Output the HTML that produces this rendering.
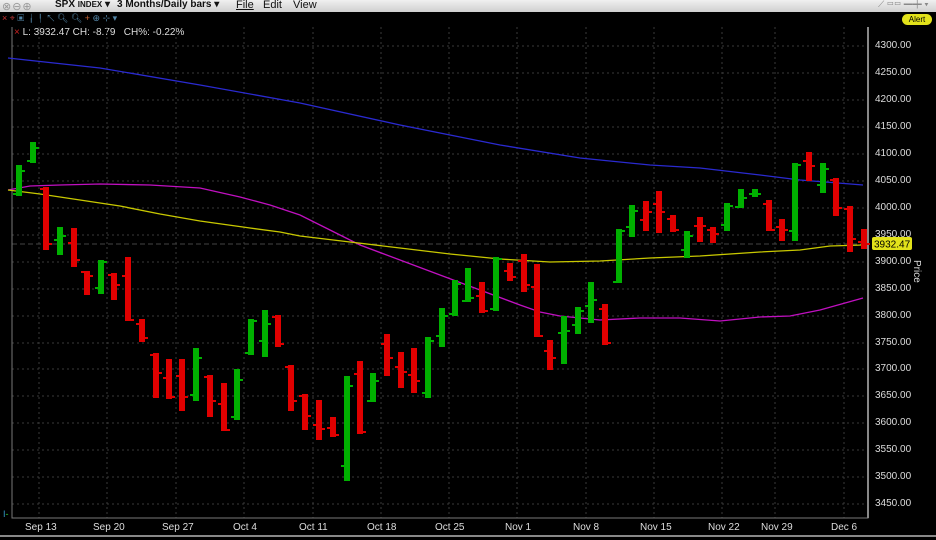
<!DOCTYPE html>
<html><head><meta charset="utf-8"><style>
body{margin:0;width:936px;height:540px;background:#000;overflow:hidden;font-family:"Liberation Sans",sans-serif;position:relative}
.top{position:absolute;left:0;top:0;width:936px;height:12px;background:linear-gradient(#f0f0f0,#cfcfcf);font-size:11px;color:#111}
.top span{position:absolute;top:-1px}
.ax{position:absolute;left:875px;font-size:10px;color:#ddd}
.dx{position:absolute;top:522px;font-size:10px;color:#ddd}
</style></head><body>
<div class="top">
<span style="left:2px;top:0;color:#999;letter-spacing:1px">⊗⊖⊕</span>
<span style="left:55px;font-weight:bold;font-size:10px">SPX <small style="font-size:8px">INDEX</small> ▾</span>
<span style="left:117px;font-weight:bold;font-size:10px">3 Months/Daily bars ▾</span>
<span style="left:236px;text-decoration:underline;font-size:11px">File</span>
<span style="left:263px;font-size:11px">Edit</span>
<span style="left:293px;font-size:11px">View</span>
<span style="left:878px;color:#888;font-size:9px">⟋ ▭▭ ━┿ ▾</span>
</div>
<div style="position:absolute;left:2px;top:13px;font-size:9px;color:#c33">× <span style="color:#a33">⌖</span> <span style="color:#58a">▣ ╽╿ ↖ 🔍︎ 🔍︎ <span style="color:#c63">+</span> ⊕ ⊹ ▾</span></div>
<div style="position:absolute;left:14px;top:27px;font-size:10px;color:#ddd"><span style="color:#c22">×</span> L: 3932.47 CH: -8.79 &nbsp; CH%: -0.22%</div>
<div style="position:absolute;left:902px;top:14px;width:30px;height:11px;border-radius:6px;background:#e2e21a;font-size:8px;line-height:11px;text-align:center;color:#000">Alert</div>
<svg width="936" height="540" style="position:absolute;left:0;top:0">
<g stroke="#3a3a3a" stroke-dasharray="2,3" stroke-width="1">
<path d="M12 46H868M12 73H868M12 100H868M12 127H868M12 154H868M12 181H868M12 208H868M12 235H868M12 262H868M12 289H868M12 316H868M12 343H868M12 369H868M12 396H868M12 423H868M12 450H868M12 477H868M12 504H868"/>
<path d="M39 27V518M107 27V518M176 27V518M244 27V518M313 27V518M381 27V518M449 27V518M517 27V518M586 27V518M654 27V518M722 27V518M775 27V518M844 27V518"/>
</g>
<path d="M12 244H868" stroke="#444" stroke-dasharray="5,3"/>
<path d="M12 27V518H868V27" fill="none" stroke="#777"/>
<path d="M868 27V518" stroke="#888" stroke-width="2"/>
<polyline fill="none" stroke="#2a2ad0" stroke-width="1.3" points="8,58 100,68 200,85 300,103 400,125 500,145 580,158 650,165 700,168 760,175 800,180 863,185"/>
<polyline fill="none" stroke="#c010c0" stroke-width="1.3" points="8,190 30,186 60,185 100,184 150,185 200,188 240,197 270,205 300,215 330,230 360,245 400,260 440,275 480,290 520,305 540,312 560,316 600,320 640,318 680,318 720,321 760,317 790,316 820,310 863,298"/>
<polyline fill="none" stroke="#c8c800" stroke-width="1.3" points="8,190 40,194 80,200 120,206 160,214 200,221 250,228 280,232 300,236 350,242 400,248 450,254 500,259 550,262 600,261 650,258 700,256 760,252 800,250 830,246 863,245"/>
<g fill="#00b000">
<rect x="16" y="165" width="6" height="31"/><rect x="13" y="193" width="4" height="2"/><rect x="21" y="170" width="4" height="2"/>
<rect x="30" y="142" width="6" height="21"/><rect x="27" y="160" width="4" height="2"/><rect x="35" y="147" width="4" height="2"/>
<rect x="57" y="227" width="6" height="28"/><rect x="54" y="239" width="4" height="2"/><rect x="62" y="235" width="4" height="2"/>
<rect x="98" y="260" width="6" height="34"/><rect x="95" y="287" width="4" height="2"/><rect x="103" y="261" width="4" height="2"/>
<rect x="193" y="348" width="6" height="53"/><rect x="190" y="394" width="4" height="2"/><rect x="198" y="357" width="4" height="2"/>
<rect x="234" y="369" width="6" height="51"/><rect x="231" y="416" width="4" height="2"/><rect x="239" y="379" width="4" height="2"/>
<rect x="248" y="319" width="6" height="36"/><rect x="245" y="352" width="4" height="2"/><rect x="253" y="320" width="4" height="2"/>
<rect x="262" y="310" width="6" height="47"/><rect x="259" y="340" width="4" height="2"/><rect x="267" y="323" width="4" height="2"/>
<rect x="344" y="376" width="6" height="105"/><rect x="341" y="465" width="4" height="2"/><rect x="349" y="385" width="4" height="2"/>
<rect x="370" y="373" width="6" height="29"/><rect x="367" y="400" width="4" height="2"/><rect x="375" y="380" width="4" height="2"/>
<rect x="425" y="337" width="6" height="61"/><rect x="422" y="392" width="4" height="2"/><rect x="430" y="340" width="4" height="2"/>
<rect x="439" y="308" width="6" height="39"/><rect x="436" y="335" width="4" height="2"/><rect x="444" y="315" width="4" height="2"/>
<rect x="452" y="280" width="6" height="36"/><rect x="449" y="313" width="4" height="2"/><rect x="457" y="283" width="4" height="2"/>
<rect x="465" y="268" width="6" height="34"/><rect x="462" y="300" width="4" height="2"/><rect x="470" y="297" width="4" height="2"/>
<rect x="493" y="257" width="6" height="54"/><rect x="490" y="308" width="4" height="2"/><rect x="498" y="258" width="4" height="2"/>
<rect x="561" y="316" width="6" height="48"/><rect x="558" y="332" width="4" height="2"/><rect x="566" y="330" width="4" height="2"/>
<rect x="575" y="307" width="6" height="27"/><rect x="572" y="324" width="4" height="2"/><rect x="580" y="310" width="4" height="2"/>
<rect x="588" y="282" width="6" height="41"/><rect x="585" y="305" width="4" height="2"/><rect x="593" y="299" width="4" height="2"/>
<rect x="616" y="229" width="6" height="54"/><rect x="613" y="281" width="4" height="2"/><rect x="621" y="230" width="4" height="2"/>
<rect x="629" y="205" width="6" height="32"/><rect x="626" y="226" width="4" height="2"/><rect x="634" y="210" width="4" height="2"/>
<rect x="684" y="231" width="6" height="27"/><rect x="681" y="249" width="4" height="2"/><rect x="689" y="235" width="4" height="2"/>
<rect x="724" y="203" width="6" height="28"/><rect x="721" y="224" width="4" height="2"/><rect x="729" y="205" width="4" height="2"/>
<rect x="738" y="189" width="6" height="19"/><rect x="735" y="206" width="4" height="2"/><rect x="743" y="197" width="4" height="2"/>
<rect x="752" y="189" width="6" height="8"/><rect x="749" y="193" width="4" height="2"/><rect x="757" y="193" width="4" height="2"/>
<rect x="792" y="163" width="6" height="78"/><rect x="789" y="230" width="4" height="2"/><rect x="797" y="164" width="4" height="2"/>
<rect x="820" y="163" width="6" height="30"/><rect x="817" y="184" width="4" height="2"/><rect x="825" y="168" width="4" height="2"/>
</g>
<g fill="#e00000">
<rect x="43" y="187" width="6" height="63"/><rect x="40" y="188" width="4" height="2"/><rect x="48" y="243" width="4" height="2"/>
<rect x="71" y="228" width="6" height="39"/><rect x="68" y="242" width="4" height="2"/><rect x="76" y="259" width="4" height="2"/>
<rect x="84" y="271" width="6" height="24"/><rect x="81" y="271" width="4" height="2"/><rect x="89" y="275" width="4" height="2"/>
<rect x="111" y="273" width="6" height="27"/><rect x="108" y="274" width="4" height="2"/><rect x="116" y="284" width="4" height="2"/>
<rect x="125" y="257" width="6" height="64"/><rect x="122" y="275" width="4" height="2"/><rect x="130" y="319" width="4" height="2"/>
<rect x="139" y="319" width="6" height="23"/><rect x="136" y="323" width="4" height="2"/><rect x="144" y="337" width="4" height="2"/>
<rect x="153" y="353" width="6" height="45"/><rect x="150" y="354" width="4" height="2"/><rect x="158" y="372" width="4" height="2"/>
<rect x="166" y="359" width="6" height="40"/><rect x="163" y="377" width="4" height="2"/><rect x="171" y="396" width="4" height="2"/>
<rect x="179" y="359" width="6" height="52"/><rect x="176" y="375" width="4" height="2"/><rect x="184" y="396" width="4" height="2"/>
<rect x="207" y="375" width="6" height="42"/><rect x="204" y="376" width="4" height="2"/><rect x="212" y="400" width="4" height="2"/>
<rect x="221" y="383" width="6" height="48"/><rect x="218" y="403" width="4" height="2"/><rect x="226" y="429" width="4" height="2"/>
<rect x="275" y="315" width="6" height="32"/><rect x="272" y="316" width="4" height="2"/><rect x="280" y="343" width="4" height="2"/>
<rect x="288" y="365" width="6" height="46"/><rect x="285" y="366" width="4" height="2"/><rect x="293" y="400" width="4" height="2"/>
<rect x="302" y="394" width="6" height="36"/><rect x="299" y="395" width="4" height="2"/><rect x="307" y="415" width="4" height="2"/>
<rect x="316" y="400" width="6" height="40"/><rect x="313" y="424" width="4" height="2"/><rect x="321" y="428" width="4" height="2"/>
<rect x="330" y="417" width="6" height="20"/><rect x="327" y="427" width="4" height="2"/><rect x="335" y="434" width="4" height="2"/>
<rect x="357" y="361" width="6" height="73"/><rect x="354" y="373" width="4" height="2"/><rect x="362" y="431" width="4" height="2"/>
<rect x="384" y="334" width="6" height="42"/><rect x="381" y="343" width="4" height="2"/><rect x="389" y="357" width="4" height="2"/>
<rect x="398" y="352" width="6" height="36"/><rect x="395" y="366" width="4" height="2"/><rect x="403" y="371" width="4" height="2"/>
<rect x="411" y="348" width="6" height="45"/><rect x="408" y="374" width="4" height="2"/><rect x="416" y="380" width="4" height="2"/>
<rect x="479" y="282" width="6" height="31"/><rect x="476" y="295" width="4" height="2"/><rect x="484" y="310" width="4" height="2"/>
<rect x="507" y="263" width="6" height="18"/><rect x="504" y="270" width="4" height="2"/><rect x="512" y="276" width="4" height="2"/>
<rect x="521" y="254" width="6" height="38"/><rect x="518" y="260" width="4" height="2"/><rect x="526" y="284" width="4" height="2"/>
<rect x="534" y="264" width="6" height="73"/><rect x="531" y="286" width="4" height="2"/><rect x="539" y="335" width="4" height="2"/>
<rect x="547" y="340" width="6" height="30"/><rect x="544" y="350" width="4" height="2"/><rect x="552" y="357" width="4" height="2"/>
<rect x="602" y="304" width="6" height="41"/><rect x="599" y="308" width="4" height="2"/><rect x="607" y="342" width="4" height="2"/>
<rect x="643" y="201" width="6" height="30"/><rect x="640" y="219" width="4" height="2"/><rect x="648" y="211" width="4" height="2"/>
<rect x="656" y="191" width="6" height="42"/><rect x="653" y="203" width="4" height="2"/><rect x="661" y="211" width="4" height="2"/>
<rect x="670" y="215" width="6" height="17"/><rect x="667" y="218" width="4" height="2"/><rect x="675" y="229" width="4" height="2"/>
<rect x="697" y="217" width="6" height="25"/><rect x="694" y="225" width="4" height="2"/><rect x="702" y="225" width="4" height="2"/>
<rect x="710" y="227" width="6" height="16"/><rect x="707" y="229" width="4" height="2"/><rect x="715" y="233" width="4" height="2"/>
<rect x="766" y="200" width="6" height="31"/><rect x="763" y="203" width="4" height="2"/><rect x="771" y="229" width="4" height="2"/>
<rect x="779" y="219" width="6" height="22"/><rect x="776" y="226" width="4" height="2"/><rect x="784" y="229" width="4" height="2"/>
<rect x="806" y="152" width="6" height="29"/><rect x="803" y="160" width="4" height="2"/><rect x="811" y="165" width="4" height="2"/>
<rect x="833" y="178" width="6" height="38"/><rect x="830" y="179" width="4" height="2"/><rect x="838" y="207" width="4" height="2"/>
<rect x="847" y="206" width="6" height="46"/><rect x="844" y="208" width="4" height="2"/><rect x="852" y="238" width="4" height="2"/>
<rect x="861" y="229" width="6" height="20"/><rect x="858" y="241" width="4" height="2"/><rect x="866" y="243" width="4" height="2"/>
</g>
<rect x="872" y="237" width="40" height="13" rx="2" fill="#e2e21a"/>
<text x="874" y="247.5" font-size="10" font-family="Liberation Sans" fill="#000">3932.47</text>
<text transform="translate(914,260) rotate(90)" font-size="10" font-family="Liberation Sans" fill="#ddd">Price</text>
<path d="M0 536H936" stroke="#888" stroke-width="2"/>
</svg>
<div class="ax" style="top:40px">4300.00</div><div class="ax" style="top:67px">4250.00</div><div class="ax" style="top:94px">4200.00</div><div class="ax" style="top:121px">4150.00</div><div class="ax" style="top:148px">4100.00</div><div class="ax" style="top:175px">4050.00</div><div class="ax" style="top:202px">4000.00</div><div class="ax" style="top:229px">3950.00</div><div class="ax" style="top:256px">3900.00</div><div class="ax" style="top:283px">3850.00</div><div class="ax" style="top:310px">3800.00</div><div class="ax" style="top:337px">3750.00</div><div class="ax" style="top:363px">3700.00</div><div class="ax" style="top:390px">3650.00</div><div class="ax" style="top:417px">3600.00</div><div class="ax" style="top:444px">3550.00</div><div class="ax" style="top:471px">3500.00</div><div class="ax" style="top:498px">3450.00</div>
<div class="dx" style="left:25px">Sep 13</div><div class="dx" style="left:93px">Sep 20</div><div class="dx" style="left:162px">Sep 27</div><div class="dx" style="left:233px">Oct 4</div><div class="dx" style="left:299px">Oct 11</div><div class="dx" style="left:367px">Oct 18</div><div class="dx" style="left:435px">Oct 25</div><div class="dx" style="left:505px">Nov 1</div><div class="dx" style="left:573px">Nov 8</div><div class="dx" style="left:640px">Nov 15</div><div class="dx" style="left:708px">Nov 22</div><div class="dx" style="left:761px">Nov 29</div><div class="dx" style="left:831px">Dec 6</div>
<div style="position:absolute;left:3px;top:509px;font-size:9px;color:#39c">I<span style="color:#3c3">-</span></div>
</body></html>
